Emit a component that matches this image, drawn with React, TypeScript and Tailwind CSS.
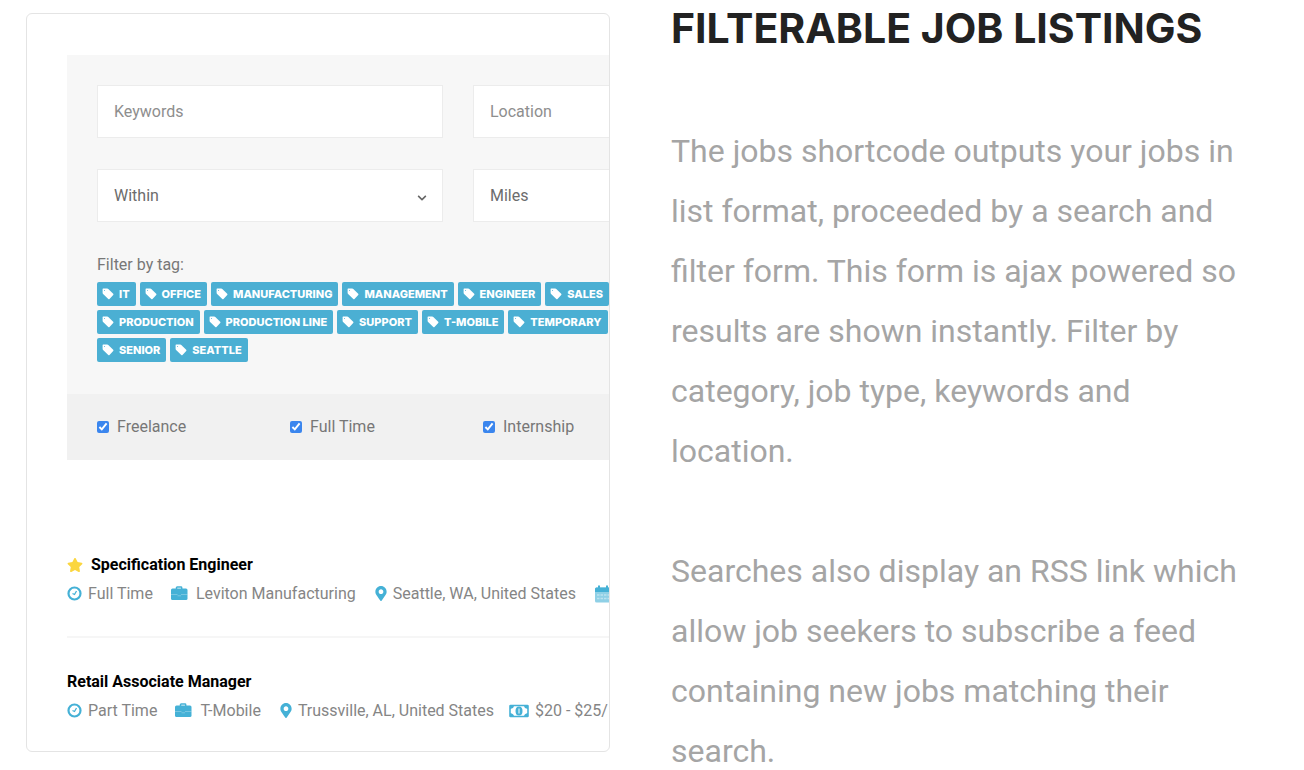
import { ReactNode } from 'react';
import { FaChevronDown, FaMapMarkerAlt, FaStar } from 'react-icons/fa';

const tagRows = [
  ['IT', 'Office', 'Manufacturing', 'Management', 'Engineer', 'Sales'],
  ['Production', 'Production Line', 'Support', 'T-Mobile', 'Temporary'],
  ['Senior', 'Seattle'],
];

const jobTypes = ['Freelance', 'Full Time', 'Internship'];

function TagIcon() {
  return (
    <svg viewBox="0 0 12 12" className="h-3 w-3" fill="currentColor" aria-hidden="true">
      <path
        fillRule="evenodd"
        d="M1.200.5H5.200Q5.800.5 6.300 1L11.200 5.800Q11.800 6.400 11.200 7L7.500 10.900Q6.900 11.500 6.300 10.900L1.100 6Q.6 5.500.6 4.800V1.100Q.6.500 1.200.5ZM2.600 1.900A.5.5 0 1 0 2.600 2.900A.5.5 0 1 0 2.600 1.900Z"
      />
    </svg>
  );
}

function ClockIcon() {
  return (
    <svg viewBox="0 0 15 15" className="h-[15px] w-[15px]" fill="none" stroke="currentColor" aria-hidden="true">
      <circle cx="7.500" cy="7.500" r="6" strokeWidth="2.200" />
      <path d="M9.500 5L7.500 8.500L5.500 7.500" strokeWidth="1.300" />
    </svg>
  );
}

function BriefcaseIcon() {
  return (
    <svg viewBox="1 0 22 16" className="h-4 w-[22px]" aria-hidden="true">
      <path d="M9.500 3.500V1.700Q9.500 1 10.200 1H14Q14.700 1 14.700 1.700V3.500" fill="none" stroke="currentColor" strokeWidth="1.500" />
      <rect x="4" y="2.500" width="16.500" height="11.500" rx="1.500" fill="currentColor" />
      <path d="M4 8.500H10.500M14 8.500H20.500M10.500 9.800H14" stroke="white" strokeOpacity="0.4" strokeWidth="0.7" />
    </svg>
  );
}

function CalendarIcon() {
  return (
    <svg viewBox="0 0 24 18" className="h-[18px] w-6" fill="currentColor" aria-hidden="true">
      <rect x="4" y="2.500" width="16" height="15" rx="1.500" fillOpacity="0.6" />
      <path d="M5.500 2.500H7V0.500H9V2.500H15V0.500H17V2.500H18.500Q20 2.500 20 4V7H4V4Q4 2.500 5.500 2.500Z" />
      <path d="M6 10H18M6 13.500H18" stroke="white" strokeOpacity="0.4" strokeWidth="1.300" strokeDasharray="2.500 1" />
    </svg>
  );
}

function MoneyIcon() {
  return (
    <svg viewBox="0 0 20 14" className="h-3.5 w-5" fill="none" aria-hidden="true">
      <rect x="1" y="1.500" width="18" height="11" rx="0.500" stroke="currentColor" strokeWidth="1.600" />
      <path d="M1 1.500H5Q5 4.500 1 5ZM19 1.500H15Q15 4.500 19 5ZM1 12.500H5Q5 9.500 1 9ZM19 12.500H15Q15 9.500 19 9Z" fill="currentColor" />
      <ellipse cx="10" cy="7" rx="3.500" ry="4.500" fill="currentColor" />
      <path d="M10 4.500V9.500" stroke="white" strokeWidth="1" />
    </svg>
  );
}

function SelectBox({ id, label }: { id: string; label: string }) {
  return (
    <div className="grid items-center">
      <select
        id={id}
        aria-label={label}
        className="col-start-1 row-start-1 h-[53px] w-full appearance-none border border-[#ececec] bg-white px-4 text-base text-[#6c6c6c]"
      >
        <option>{label}</option>
      </select>
      <FaChevronDown className="pointer-events-none col-start-1 row-start-1 mt-1 mr-4 h-2.5 w-2.5 justify-self-end text-[#666]" />
    </div>
  );
}

function TextBox({ id, label }: { id: string; label: string }) {
  return (
    <input
      id={id}
      type="text"
      aria-label={label}
      placeholder={label}
      className="h-[53px] w-full border border-[#ececec] bg-white px-4 text-base placeholder:text-[#8e8e8e]"
    />
  );
}

function Meta({ icon, children }: { icon: ReactNode; children?: ReactNode }) {
  return (
    <li className="flex items-center gap-1.5">
      <span className="text-[#45b1d6]">{icon}</span>
      {children}
    </li>
  );
}

function SearchForm() {
  return (
    <form className="w-[782px] bg-[#f7f7f7]">
      <div className="px-[30px] pt-[30px] pb-8">
        <div className="grid grid-cols-[346px_346px] gap-x-[30px] gap-y-[31px]">
          <TextBox id="keywords" label="Keywords" />
          <TextBox id="location" label="Location" />
          <SelectBox id="within" label="Within" />
          <SelectBox id="miles" label="Miles" />
        </div>
        <p className="mt-[30px] mb-1 text-base leading-[26px] text-[#777]">Filter by tag:</p>
        <div className="flex flex-col gap-1">
          {tagRows.map((row) => (
            <div key={row[0]} className="flex gap-1">
              {row.map((tag) => (
                <a
                  key={tag}
                  href="#"
                  className="flex h-6 items-center gap-[5px] rounded-xs bg-[#4bafd3] pr-1.5 pl-[5px] font-['Inter',sans-serif] text-[11px] font-extrabold whitespace-nowrap text-white uppercase"
                >
                  <TagIcon />
                  {tag}
                </a>
              ))}
            </div>
          ))}
        </div>
      </div>
      <div className="grid grid-cols-[193px_193px_193px] bg-[#f1f1f1] px-[30px] py-5">
        {jobTypes.map((type) => (
          <label key={type} className="flex items-center gap-2 text-base leading-[26px] text-[#777]">
            <input type="checkbox" defaultChecked className="h-3 w-3 accent-[#3b86ee]" />
            {type}
          </label>
        ))}
      </div>
    </form>
  );
}

function JobList() {
  return (
    <ul className="mt-[90px] w-[782px] text-base leading-[29px] whitespace-nowrap">
      <li className="border-b-2 border-[#f6f6f6] pb-7">
        <h3 className="flex items-center gap-2 font-bold text-black">
          <FaStar className="h-4 w-4 text-[#fbd63f]" />
          Specification Engineer
        </h3>
        <ul className="flex gap-[15px] text-[#858585]">
          <Meta icon={<ClockIcon />}>Full Time</Meta>
          <Meta icon={<BriefcaseIcon />}>Leviton Manufacturing</Meta>
          <Meta icon={<FaMapMarkerAlt className="ml-1 h-[15px] w-3" />}>Seattle, WA, United States</Meta>
          <Meta icon={<CalendarIcon />} />
        </ul>
      </li>
      <li className="pt-[29px]">
        <h3 className="font-bold text-black">Retail Associate Manager</h3>
        <ul className="flex gap-[15px] text-[#858585]">
          <Meta icon={<ClockIcon />}>Part Time</Meta>
          <Meta icon={<BriefcaseIcon />}>T-Mobile</Meta>
          <Meta icon={<FaMapMarkerAlt className="ml-1 h-[15px] w-3" />}>Trussville, AL, United States</Meta>
          <Meta icon={<MoneyIcon />}>$20 - $25/</Meta>
        </ul>
      </li>
    </ul>
  );
}

export default function App() {
  return (
    <main className="grid grid-cols-2 items-start gap-[61px] bg-white pr-[49px] pl-[26px] font-['Roboto',sans-serif]">
      <section className="mt-[13px] overflow-hidden rounded-md border border-[#e4e4e4] pt-[41px] pb-[26px] pl-10">
        <SearchForm />
        <JobList />
      </section>
      <section>
        <h2 className="pt-1 font-['Inter',sans-serif] text-[41px] leading-[48px] font-bold whitespace-nowrap text-[#222] uppercase">
          Filterable Job Listings
        </h2>
        <div className="mt-[69px] flex flex-col gap-[60px] text-[32px] leading-[60px] text-[#a5a5a5]">
          <p>
            The jobs shortcode outputs your jobs in list format, proceeded by a search and filter form. This form is
            ajax powered so results are shown instantly. Filter by category, job type, keywords and location.
          </p>
          <p>
            Searches also display an RSS link which allow job seekers to subscribe a feed containing new jobs matching
            their search.
          </p>
        </div>
      </section>
    </main>
  );
}
